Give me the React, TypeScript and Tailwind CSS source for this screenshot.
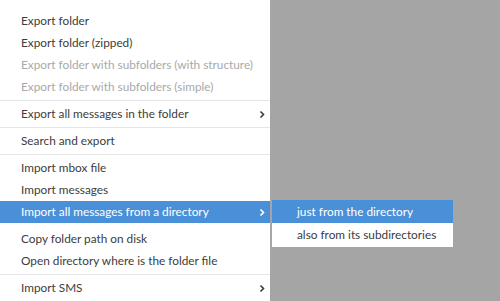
import React from "react";

type Item =
  | { kind: "item"; label: string; disabled?: boolean; sub?: boolean; active?: boolean }
  | { kind: "sep"; hidden?: boolean };

const items: Item[] = [
  { kind: "item", label: "Export folder" },
  { kind: "item", label: "Export folder (zipped)" },
  { kind: "item", label: "Export folder with subfolders (with structure)", disabled: true },
  { kind: "item", label: "Export folder with subfolders (simple)", disabled: true },
  { kind: "sep" },
  { kind: "item", label: "Export all messages in the folder", sub: true },
  { kind: "sep" },
  { kind: "item", label: "Search and export" },
  { kind: "sep" },
  { kind: "item", label: "Import mbox file" },
  { kind: "item", label: "Import messages" },
  { kind: "item", label: "Import all messages from a directory", sub: true, active: true },
  { kind: "sep", hidden: true },
  { kind: "item", label: "Copy folder path on disk" },
  { kind: "item", label: "Open directory where is the folder file" },
  { kind: "sep" },
  { kind: "item", label: "Import SMS", sub: true },
];

function Chevron({ white }: { white?: boolean }) {
  return (
    <svg width="6" height="9" viewBox="0 0 6 9" className="shrink-0">
      <path
        d="M1.5 1.5 L4.5 4.5 L1.5 7.5"
        fill="none"
        stroke={white ? "#ffffff" : "#3c3c3c"}
        strokeWidth="1.6"
      />
    </svg>
  );
}

export default function App() {
  return (
    <div
      className="relative w-[500px] h-[301px] overflow-hidden bg-[#a5a5a5] flex text-[11.8px]"
      style={{ fontFamily: 'Lato, "Noto Sans", sans-serif' }}
    >
      <div className="w-[270px] h-full bg-white pt-[10px] flex flex-col">
        {items.map((it, i) =>
          it.kind === "sep" ? (
            <div key={i} className="h-[5px] flex items-center">
              <div className={`h-px w-full ${it.hidden ? "bg-transparent" : "bg-[#e6e6e6]"}`} />
            </div>
          ) : (
            <div
              key={i}
              className={`h-[22px] shrink-0 flex items-center pl-[21px] pr-[5px] ${
                it.active ? "bg-[#4a90d9] text-white" : it.disabled ? "text-[#a9a9a9]" : "text-[#3c3c3c]"
              }`}
            >
              <span className="flex-1 whitespace-nowrap">{it.label}</span>
              {it.sub && <Chevron white={it.active} />}
            </div>
          )
        )}
      </div>
      <div className="absolute left-[272px] top-[200px] w-[181px] bg-white flex flex-col pb-px">
        <div className="h-[23px] flex items-center pl-[25px] bg-[#4a90d9] text-white whitespace-nowrap">
          just from the directory
        </div>
        <div className="h-[23px] flex items-center pl-[25px] text-[#3c3c3c] whitespace-nowrap">
          also from its subdirectories
        </div>
      </div>
    </div>
  );
}
